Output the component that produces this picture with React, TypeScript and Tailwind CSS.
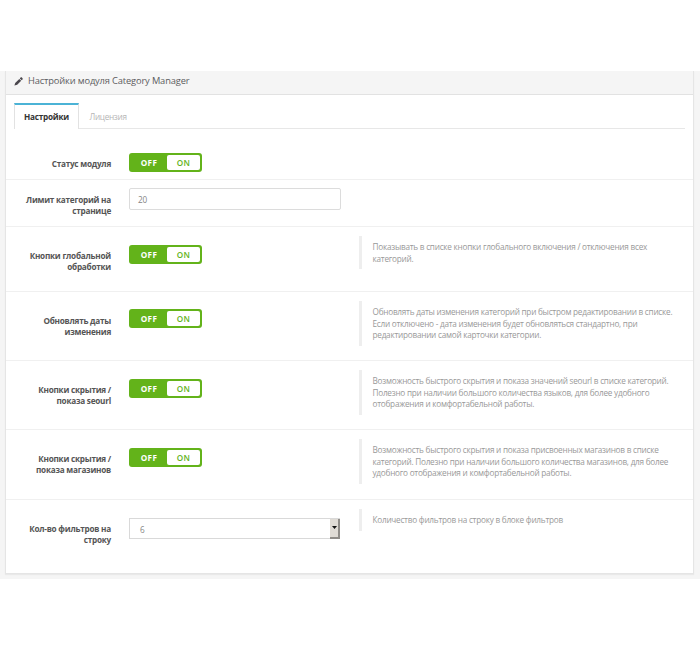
import { clsx } from 'clsx';

type Row = {
  label: string[];
  hint?: string[];
  control: 'switch' | 'input' | 'select';
  value?: string;
  className: string;
  labelClass: string;
  controlClass: string;
};

const rows: Row[] = [
  { label: ['Статус модуля'], control: 'switch', className: 'h-[51px]', labelClass: 'pt-[29px]', controlClass: 'pt-6' },
  { label: ['Лимит категорий на', 'странице'], control: 'input', value: '20', className: 'h-[47px]', labelClass: 'pt-[14px]', controlClass: 'pt-2' },
  {
    label: ['Кнопки глобальной', 'обработки'],
    hint: ['Показывать в списке кнопки глобального включения / отключения всех', 'категорий.'],
    control: 'switch', className: 'h-[65px]', labelClass: 'pt-[23px]', controlClass: 'pt-[17.5px]',
  },
  {
    label: ['Обновлять даты', 'изменения'],
    hint: ['Обновлять даты изменения категорий при быстром редактировании в списке.', 'Если отключено - дата изменения будет обновляться стандартно, при', 'редактировании самой карточки категории.'],
    control: 'switch', className: 'h-[69px]', labelClass: 'pt-[23px]', controlClass: 'pt-[17px]',
  },
  {
    label: ['Кнопки скрытия /', 'показа seourl'],
    hint: ['Возможность быстрого скрытия и показа значений seourl в списке категорий.', 'Полезно при наличии большого количества языков, для более удобного', 'отображения и комфортабельной работы.'],
    control: 'switch', className: 'h-[69px]', labelClass: 'pt-[23px]', controlClass: 'pt-[18px]',
  },
  {
    label: ['Кнопки скрытия /', 'показа магазинов'],
    hint: ['Возможность быстрого скрытия и показа присвоенных магазинов в списке', 'категорий. Полезно при наличии большого количества магазинов, для более', 'удобного отображения и комфортабельной работы.'],
    control: 'switch', className: 'h-[70px]', labelClass: 'pt-[23px]', controlClass: 'pt-[18px]',
  },
  {
    label: ['Кол-во фильтров на', 'строку'],
    hint: ['Количество фильтров на строку в блоке фильтров'],
    control: 'select', value: '6', className: 'h-[73px] border-b-0', labelClass: 'pt-[23px]', controlClass: 'pt-[18px]',
  },
];

function Switch() {
  return (
    <button className="flex h-[19px] w-[73px] rounded-[3px] bg-[#63b31a] p-[2px] text-[8.2px] leading-[15px] font-bold tracking-[0.3px]">
      <span className="w-9 text-center text-white">OFF</span>
      <span className="w-[33px] rounded-[2px] bg-white text-center font-semibold text-[#63b31a]">ON</span>
    </button>
  );
}

function Control({ row }: { row: Row }) {
  if (row.control === 'switch') return <Switch />;
  if (row.control === 'input') {
    return (
      <div className="flex h-[22px] w-[212px] items-center rounded-[2px] border border-[#dcdcdc] bg-white pl-[8px] text-[8.2px] tracking-[-0.2px] text-[#858585]">
        <span className="pt-[2px]">{row.value}</span>
      </div>
    );
  }
  return (
    <div className="flex h-[21px] w-[211px] items-center justify-between border border-r-0 border-[#d9d9d9] bg-white pl-[10px] text-[8.2px] text-[#858585]">
      <span className="pt-[3px]">{row.value}</span>
      <span className="flex h-[20px] w-[10px] items-center justify-center border-r-2 border-b-2 border-[#8f8c88] bg-[#dfdbd5]">
        <svg width="5" height="3" viewBox="0 0 5 3">
          <path d="M0 0h5L2.5 3z" fill="#111" />
        </svg>
      </span>
    </div>
  );
}

export default function App() {
  return (
    <div className="h-[650px] w-[700px] overflow-hidden bg-white pt-[71px] font-['Open_Sans','Noto_Sans',sans-serif]">
      <div className="h-[508px] bg-[#f5f5f5] pl-[5px]">
        <div className="h-[503px] w-[689px] border border-t-0 border-[#e5e5e5] bg-white shadow-[0_1px_1px_#e9e9e9]">
          <header className="flex h-6 items-center border-b border-[#e2e2e2] bg-[#f5f5f5] pb-[3px] pl-[8px] text-[#5c5c60]">
            <svg width="9" height="9" viewBox="0 0 18 18" fill="#4a474d">
              <path d="M11.6 2.8l1.6-1.6c.8-.8 1.8-.8 2.6 0l1.2 1.2c.8.8.8 1.8 0 2.6L15.4 6.6zM10.6 3.8l3.8 3.8-8 7.8L.8 17.2l1.6-5.4z" />
            </svg>
            <h3 className="ml-[5px] text-[9.3px] leading-[14px] font-normal tracking-[-0.14px] whitespace-nowrap">Настройки модуля Category Manager</h3>
          </header>

          <nav className="mx-[8px] flex h-[34px] items-end border-b border-[#e7e7e7] text-[8.2px]">
            <a className="-mb-px flex h-[26px] w-[65px] items-center justify-center border-x border-t-2 border-x-[#e2e2e2] border-t-[#4bb3d6] bg-white font-bold tracking-[-0.24px] text-[#333]">
              Настройки
            </a>
            <a className="flex h-[25px] items-center pt-[3px] pl-[10.5px] tracking-[-0.3px] text-[#b5b5b5]">Лицензия</a>
          </nav>

          <form>
            {rows.map((row) => (
              <div key={row.label.join(' ')} className={clsx('flex border-b border-[#f0f0f0]', row.className)}>
                <label className={clsx('w-[105px] shrink-0 text-right text-[8.2px] leading-[11.4px] font-bold tracking-[-0.24px] whitespace-nowrap text-[#555]', row.labelClass)}>
                  {row.label.map((line) => <span key={line} className="block">{line}</span>)}
                </label>
                <div className={clsx('ml-[18px] w-[230px] shrink-0', row.controlClass)}>
                  <Control row={row} />
                </div>
                {row.hint && (
                  <blockquote className="mt-[9px] self-start border-l-[3px] border-[#eeeeee] py-[5px] pl-[10.5px] text-[8.2px] leading-[11.5px] tracking-[-0.24px] whitespace-nowrap text-[#999]">
                    {row.hint.map((line) => <p key={line}>{line}</p>)}
                  </blockquote>
                )}
              </div>
            ))}
          </form>
        </div>
      </div>
    </div>
  );
}
